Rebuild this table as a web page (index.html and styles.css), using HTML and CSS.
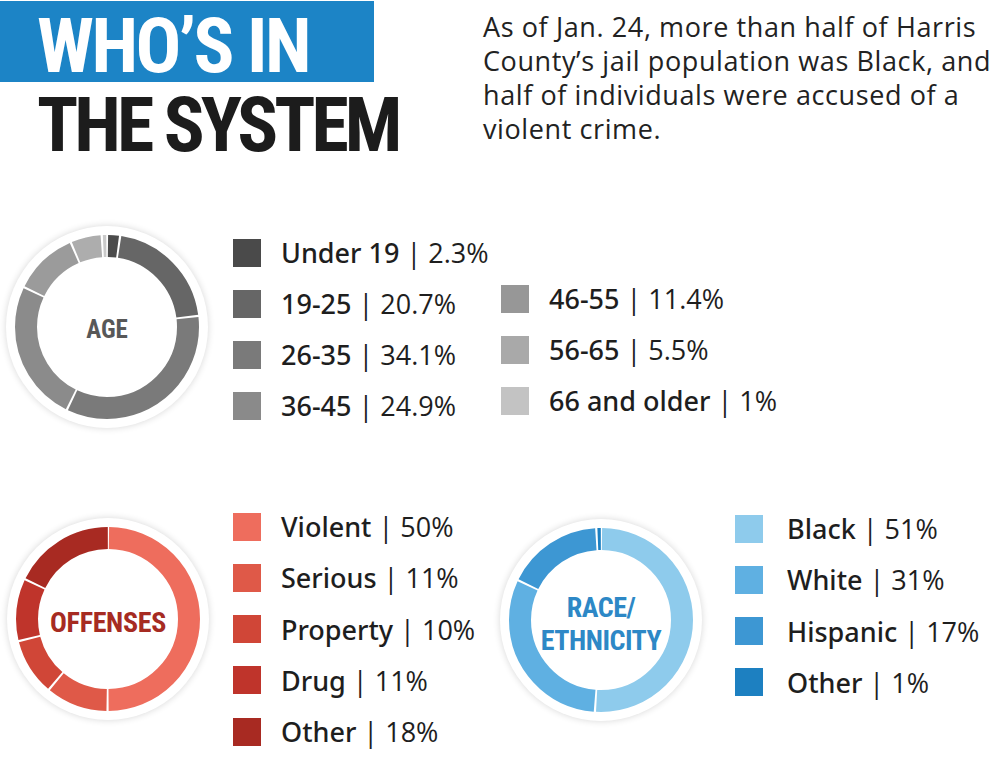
FILE: index.html
```html
<!DOCTYPE html>
<html lang="en">
<head>
<meta charset="utf-8">
<title>Who's in the system</title>
<link rel="stylesheet" href="styles.css">
</head>
<body>
<div class="page">
  <header class="header">
    <div class="title">
      <div class="title-top"><span>WHO’S IN</span></div>
      <div class="title-bottom">THE SYSTEM</div>
    </div>
    <p class="intro">As of Jan. 24, more than half of Harris<br>County’s jail population was Black, and<br>half of individuals were accused of a<br>violent crime.</p>
  </header>

  <section class="age">
    <div class="donut donut-age">
      <svg viewBox="0 0 202 202" width="202" height="202">
        <g transform="rotate(-90 101 101)" fill="none" stroke-width="22">
          <circle cx="101" cy="101" r="81" stroke="#4b4b4b" stroke-dasharray="9.71 600" stroke-dashoffset="-1"/>
          <circle cx="101" cy="101" r="81" stroke="#666666" stroke-dasharray="103.35 600" stroke-dashoffset="-12.71"/>
          <circle cx="101" cy="101" r="81" stroke="#7a7a7a" stroke-dasharray="171.55 600" stroke-dashoffset="-118.06"/>
          <circle cx="101" cy="101" r="81" stroke="#8b8b8b" stroke-dasharray="124.73 600" stroke-dashoffset="-291.61"/>
          <circle cx="101" cy="101" r="81" stroke="#9b9b9b" stroke-dasharray="56.02 600" stroke-dashoffset="-418.34"/>
          <circle cx="101" cy="101" r="81" stroke="#adadad" stroke-dasharray="25.99 600" stroke-dashoffset="-476.36"/>
          <circle cx="101" cy="101" r="81" stroke="#cacaca" stroke-dasharray="3.09 600" stroke-dashoffset="-504.35"/>
        </g>
      </svg>
      <div class="donut-label label-age">AGE</div>
    </div>
    <ul class="legend legend-age1">
      <li><span class="sw" style="background:#4a4a4a"></span><b>Under 19</b><span class="val">&nbsp;| 2.3%</span></li>
      <li><span class="sw" style="background:#666666"></span><b>19-25</b><span class="val">&nbsp;| 20.7%</span></li>
      <li><span class="sw" style="background:#7a7a7a"></span><b>26-35</b><span class="val">&nbsp;| 34.1%</span></li>
      <li><span class="sw" style="background:#8a8a8a"></span><b>36-45</b><span class="val">&nbsp;| 24.9%</span></li>
    </ul>
    <ul class="legend legend-age2">
      <li><span class="sw" style="background:#979797"></span><b>46-55</b><span class="val">&nbsp;| 11.4%</span></li>
      <li><span class="sw" style="background:#a9a9a9"></span><b>56-65</b><span class="val">&nbsp;| 5.5%</span></li>
      <li><span class="sw" style="background:#c3c3c3"></span><b>66 and older</b><span class="val">&nbsp;| 1%</span></li>
    </ul>
  </section>

  <section class="bottom">
    <div class="group group-offenses">
      <div class="donut donut-off">
        <svg viewBox="0 0 202 202" width="202" height="202">
          <g transform="rotate(-90 101 101)" fill="none" stroke-width="22">
            <circle cx="101" cy="101" r="81" stroke="#ee6d5d" stroke-dasharray="252.47 600" stroke-dashoffset="-1"/>
            <circle cx="101" cy="101" r="81" stroke="#df5948" stroke-dasharray="53.98 600" stroke-dashoffset="-255.47"/>
            <circle cx="101" cy="101" r="81" stroke="#d04637" stroke-dasharray="48.89 600" stroke-dashoffset="-311.45"/>
            <circle cx="101" cy="101" r="81" stroke="#bf342b" stroke-dasharray="53.98 600" stroke-dashoffset="-362.34"/>
            <circle cx="101" cy="101" r="81" stroke="#a82a22" stroke-dasharray="89.61 600" stroke-dashoffset="-418.32"/>
          </g>
        </svg>
        <div class="donut-label label-off">OFFENSES</div>
      </div>
      <ul class="legend legend-off">
        <li><span class="sw" style="background:#ee6d5d"></span><b>Violent</b><span class="val">&nbsp;| 50%</span></li>
        <li><span class="sw" style="background:#df5948"></span><b>Serious</b><span class="val">&nbsp;| 11%</span></li>
        <li><span class="sw" style="background:#d04637"></span><b>Property</b><span class="val">&nbsp;| 10%</span></li>
        <li><span class="sw" style="background:#bf342b"></span><b>Drug</b><span class="val">&nbsp;| 11%</span></li>
        <li><span class="sw" style="background:#a82a22"></span><b>Other</b><span class="val">&nbsp;| 18%</span></li>
      </ul>
    </div>
    <div class="group group-race">
      <div class="donut donut-race">
        <svg viewBox="0 0 202 202" width="202" height="202">
          <g transform="rotate(-90 101 101)" fill="none" stroke-width="22">
            <circle cx="101" cy="101" r="81" stroke="#8ecbec" stroke-dasharray="257.56 600" stroke-dashoffset="-1"/>
            <circle cx="101" cy="101" r="81" stroke="#5fb0e2" stroke-dasharray="155.77 600" stroke-dashoffset="-260.56"/>
            <circle cx="101" cy="101" r="81" stroke="#3d97d3" stroke-dasharray="84.52 600" stroke-dashoffset="-418.33"/>
            <circle cx="101" cy="101" r="81" stroke="#1d80c1" stroke-dasharray="3.09 600" stroke-dashoffset="-504.85"/>
          </g>
        </svg>
        <div class="donut-label label-race">RACE/<br>ETHNICITY</div>
      </div>
      <ul class="legend legend-race">
        <li><span class="sw" style="background:#8ecbec"></span><b>Black</b><span class="val">&nbsp;| 51%</span></li>
        <li><span class="sw" style="background:#5fb0e2"></span><b>White</b><span class="val">&nbsp;| 31%</span></li>
        <li><span class="sw" style="background:#3d97d3"></span><b>Hispanic</b><span class="val">&nbsp;| 17%</span></li>
        <li><span class="sw" style="background:#1d80c1"></span><b>Other</b><span class="val">&nbsp;| 1%</span></li>
      </ul>
    </div>
  </section>
</div>
</body>
</html>
```

FILE: styles.css
```css
html, body {
  margin: 0;
  padding: 0;
  background: #ffffff;
}

.page {
  width: 1000px;
  height: 772px;
  overflow: hidden;
  font-family: "Open Sans", "Noto Sans", sans-serif;
  color: #1e1e1e;
}

/* ---------- header ---------- */
.header {
  display: flex;
  height: 226px;
}

.title {
  width: 483px;
  flex: none;
  padding-top: 1px;
  font-family: "Roboto Condensed", "Open Sans", sans-serif;
  font-stretch: 75%;
  font-weight: 700;
  font-size: 76px;
}

.title-top {
  width: 374px;
  height: 81px;
  box-sizing: border-box;
  background: #1c84c6;
  color: #ffffff;
  padding-left: 37px;
  padding-top: 10px;
  line-height: 71px;
  letter-spacing: -2.5px;
  white-space: nowrap;
}

.title-bottom {
  padding-left: 37px;
  padding-top: 4px;
  color: #1c1c1c;
  line-height: 78px;
  letter-spacing: -4px;
  white-space: nowrap;
}

.intro {
  margin: 0;
  padding-top: 10px;
  font-size: 27px;
  line-height: 34px;
  letter-spacing: 0.6px;
  color: #222222;
  white-space: nowrap;
}

/* ---------- donuts ---------- */
.donut {
  flex: none;
  width: 202px;
  height: 202px;
  border-radius: 50%;
  background: #ffffff;
  box-shadow: 0 0 7px rgba(0, 0, 0, 0.16);
  display: grid;
  place-items: center;
}

.donut > svg,
.donut > .donut-label {
  grid-area: 1 / 1;
}

.donut > svg {
  display: block;
}

.donut-label {
  font-family: "Roboto Condensed", "Open Sans", sans-serif;
  font-stretch: 75%;
  font-weight: 700;
  text-align: center;
}

.label-age {
  font-size: 25px;
  color: #585858;
  padding-top: 4px;
}

.label-off {
  font-size: 28px;
  color: #a62b22;
  padding-top: 6px;
  letter-spacing: -0.3px;
}

.label-race {
  font-size: 28px;
  line-height: 33px;
  color: #2d88c6;
  padding-top: 8px;
  letter-spacing: -0.5px;
}

/* ---------- legends ---------- */
.legend {
  list-style: none;
  margin: 0;
  padding: 0;
  font-size: 27px;
}

.legend li {
  display: flex;
  align-items: center;
  height: 51px;
  white-space: nowrap;
}

.legend .sw {
  flex: none;
  width: 28px;
  height: 28px;
  margin-right: 20px;
}

.legend b {
  font-family: "Noto Sans", "Open Sans", sans-serif;
  font-weight: 500;
}

.legend .val {
  font-weight: 400;
}

/* ---------- age section ---------- */
.age {
  display: flex;
  height: 274px;
}

.donut-age {
  margin-left: 6px;
}

.legend-age1 {
  margin-left: 25px;
  width: 268px;
  padding-top: 1px;
}

.legend-age2 {
  padding-top: 47px;
}

/* ---------- bottom section ---------- */
.bottom {
  display: flex;
}

.group {
  display: flex;
}

.group-offenses {
  width: 493px;
}

.donut-off {
  margin-left: 7px;
  margin-top: 18px;
}

.legend-off {
  margin-left: 24px;
  padding-top: 1px;
}

.legend-off li {
  height: 51.25px;
}

.donut-race {
  margin-left: 7px;
  margin-top: 19px;
}

.legend-race {
  margin-left: 33px;
  padding-top: 3px;
}

.legend-race li {
  height: 51.25px;
}

.legend-race .sw {
  margin-right: 24px;
}
```
